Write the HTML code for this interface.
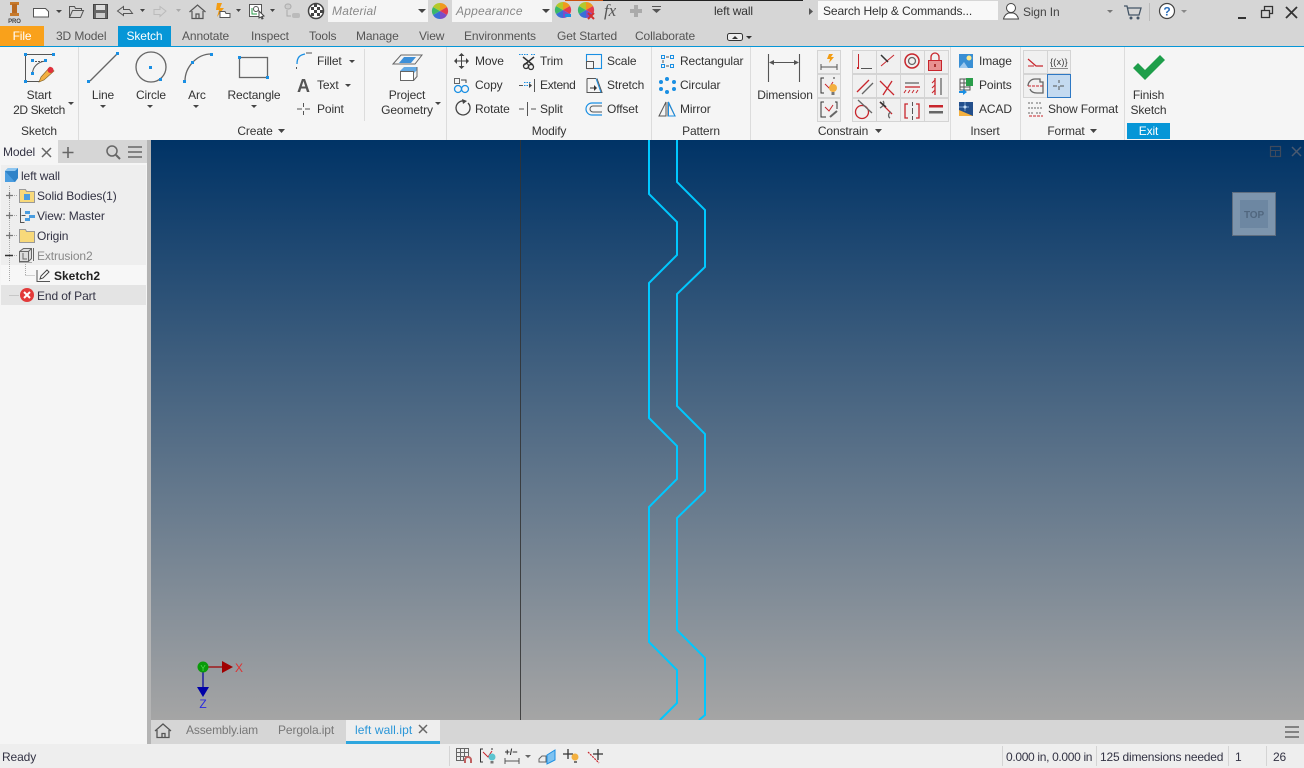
<!DOCTYPE html>
<html><head><meta charset="utf-8"><title>left wall</title>
<style>
html,body{margin:0;padding:0;background:#f5f5f5;width:1304px;height:768px;overflow:hidden}
svg{display:block;position:absolute;left:0;top:0}
text{font-family:"Liberation Sans",sans-serif;font-size:12px;fill:#333;letter-spacing:-.12px}
.m{text-anchor:middle}
.tab{fill:#555}
.ic{fill:none;stroke:#555;stroke-width:1}
.r{fill:none;stroke:#c8252c;stroke-width:1.3}
.g{fill:none;stroke:#666;stroke-width:1.3}
.b{fill:#1a8fe3}
.a{fill:#444}
</style></head><body>
<svg width="1304" height="768" viewBox="0 0 1304 768" xmlns="http://www.w3.org/2000/svg">
<defs>
<linearGradient id="vp" x1="0" y1="0" x2="0" y2="1"><stop offset="0" stop-color="#003366"/><stop offset="1" stop-color="#a5a5a5"/></linearGradient>
</defs>
<!-- bars -->
<rect x="0" y="0" width="1304" height="46" fill="#d6d6d6"/>
<rect x="0" y="46" width="1304" height="1" fill="#0696d7"/>
<rect x="0" y="47" width="1304" height="93" fill="#f5f5f5"/>
<!-- title bar -->
<rect x="10" y="2" width="9" height="3" fill="#c77a2c"/><rect x="12" y="4" width="5" height="10" fill="#b96a22"/><rect x="10" y="13" width="9" height="3" fill="#c77a2c"/>
<text x="14.5" y="23" class="m" style="font-size:6px;font-weight:bold;fill:#444">PRO</text>
<path d="M33.5 8.5h12l3 3v5.500h-15z" fill="#fff" stroke="#555"/>
<path class="a" d="M56 10h6l-3 3z"/>
<path d="M69.500 17.500v-11h5l1 2h6v2M69.500 17.500l3-7h11l-3 7z" fill="none" stroke="#555"/>
<rect x="93.500" y="4.500" width="14" height="14" fill="#666" stroke="#444"/><rect x="96" y="5" width="9" height="5" fill="#ddd"/><rect x="96" y="13" width="9" height="5" fill="#ccc"/>
<path d="M117.500 11l6-4.500v3h6l3 4h-9v2z" fill="none" stroke="#555"/>
<path class="a" d="M140 9h5l-2.500 3z"/>
<path d="M166 11l-6-4.500v3h-6v5h6v2z" fill="none" stroke="#bbb"/>
<path fill="#aaa" d="M176 9h5l-2.500 3z"/>
<path d="M189.500 12l8-7 8 7M192 11v7.500h11V11M196 18v-4h3v4" fill="none" stroke="#555" stroke-width="1.200"/>
<path fill="#f39c12" d="M217 3h5l-2 5h4l-7 9 2-7h-3z"/>
<path d="M220 17.500v-6h5l1 2h4v4z" fill="#fff" stroke="#555"/>
<path class="a" d="M236 9h5l-2.500 3z"/>
<rect x="249.500" y="4.500" width="12" height="12" fill="#fff" stroke="#555"/><path d="M252 8v6h5" fill="none" stroke="#2a9d4a"/><circle cx="256" cy="9" r="2.500" fill="none" stroke="#555"/><path fill="#fff" stroke="#444" d="M259 11l5 5-2 .5 1 2-1 .5-1-2-2 1z"/>
<path class="a" d="M270 9h5l-2.500 3z"/>
<rect x="285" y="4" width="6" height="5" rx="2.500" fill="#ccc" stroke="#aaa"/><rect x="292" y="13" width="8" height="5" rx="2" fill="#bbb"/><path d="M287 10v6h4" fill="none" stroke="#aaa"/>
<circle cx="316" cy="11" r="7.500" fill="#fff" stroke="#444" stroke-width="1.500"/>
<g fill="#444"><rect x="311" y="7" width="3" height="3"/><rect x="317" y="7" width="3" height="3"/><rect x="314" y="10" width="3" height="3"/><rect x="320" y="10" width="3" height="3"/><rect x="311" y="13" width="3" height="3"/><rect x="317" y="13" width="3" height="3"/><rect x="314" y="4" width="3" height="3"/></g>
<rect x="328" y="0" width="100" height="22" fill="#f5f5f5"/>
<text x="332" y="15" style="font-style:italic;fill:#888;letter-spacing:.2px">Material</text>
<path class="a" d="M418 9h8l-4 4z"/>
<g id="wheel"><path d="M440 11V3a8 8 0 0 1 7 4z" fill="#ef9a1d"/><path d="M440 11l7-4a8 8 0 0 1 0 8z" fill="#e23a4f"/><path d="M440 11l7 4a8 8 0 0 1-7 4z" fill="#7b4dc8"/><path d="M440 11v8a8 8 0 0 1-7-4z" fill="#3a6fd8"/><path d="M440 11l-7 4a8 8 0 0 1 0-8z" fill="#39b86a"/><path d="M440 11l-7-4a8 8 0 0 1 7-4z" fill="#b5c82a"/></g>
<rect x="452" y="0" width="100" height="22" fill="#f5f5f5"/>
<text x="456" y="15" style="font-style:italic;fill:#888;letter-spacing:.2px">Appearance</text>
<path class="a" d="M542 9h8l-4 4z"/>
<use href="#wheel" x="123" y="-1"/><rect x="565" y="14" width="6" height="3" fill="#1a8fe3"/>
<use href="#wheel" x="146" y="-1"/><path d="M588 13l6 6m0-6l-6 6" stroke="#d32f2f" stroke-width="2"/>
<text x="604" y="16" style="font-family:'Liberation Serif',serif;font-style:italic;font-size:17px;fill:#555">fx</text>
<path d="M634 5h4v4h4v4h-4v4h-4v-4h-4V9h4z" fill="#aaa"/>
<path d="M652 6h9v1h-9zM652 9h9l-4.500 4z" fill="#555"/>
<rect x="565" y="0" width="38" height="1" fill="#c8500f"/><rect x="603" y="0" width="200" height="1" fill="#222"/>
<text x="714" y="15">left wall</text>
<path fill="#555" d="M809 8l4 3.500-4 3.500z"/>
<rect x="818" y="1" width="180" height="19" fill="#f8f8f8"/>
<text x="823" y="15">Search Help &amp; Commands...</text>
<circle cx="1011" cy="8" r="4.500" fill="#fff" stroke="#444"/><path d="M1003.500 19c1-4 3-5 5-6h5c2 1 4 2 5 6z" fill="#fff" stroke="#444"/>
<text x="1023" y="16" style="fill:#444">Sign In</text>
<path fill="#777" d="M1107 10h6l-3 3z"/>
<path d="M1124 6h3l2 9h10l2-7h-13" fill="none" stroke="#456" stroke-width="1.300"/><circle cx="1131" cy="18" r="1.500" fill="#456"/><circle cx="1138" cy="18" r="1.500" fill="#456"/>
<rect x="1149" y="3" width="1" height="18" fill="#bbb"/>
<circle cx="1167" cy="11" r="7.500" fill="#fff" stroke="#444" stroke-width="1.200"/>
<text x="1167" y="15.500" class="m" style="font-weight:bold;fill:#2a6ebb;font-size:12px">?</text>
<path fill="#888" d="M1181 10h6l-3 3z"/>
<rect x="1238" y="17" width="8" height="2" fill="#333"/>
<path d="M1261.500 10.500h8v7h-8zM1264.500 10V6.500h8v7H1270" fill="none" stroke="#333" stroke-width="1.300"/>
<path d="M1286 7l11 11m0-11l-11 11" stroke="#333" stroke-width="1.800"/>
<!-- tabs -->
<rect x="0" y="26" width="44" height="20" fill="#f9a11b"/>
<text x="22" y="40" class="m" style="fill:#fff">File</text>
<rect x="118" y="26" width="53" height="20" fill="#0696d7"/>
<text x="144.500" y="40" class="m" style="fill:#fff">Sketch</text>
<text x="56" y="40" class="tab">3D Model</text>
<text x="182" y="40" class="tab">Annotate</text>
<text x="251" y="40" class="tab">Inspect</text>
<text x="309" y="40" class="tab">Tools</text>
<text x="356" y="40" class="tab">Manage</text>
<text x="419" y="40" class="tab">View</text>
<text x="464" y="40" class="tab">Environments</text>
<text x="557" y="40" class="tab">Get Started</text>
<text x="635" y="40" class="tab">Collaborate</text>
<rect x="727.500" y="33.500" width="15" height="7" rx="2" fill="#eee" stroke="#333"/><path fill="#333" d="M732 39l3-3 3 3z"/><path fill="#333" d="M746 36h6l-3 3z"/>
<!-- ribbon separators -->
<g fill="#dcdcdc"><rect x="78" y="47" width="1" height="93"/><rect x="446" y="47" width="1" height="93"/><rect x="651" y="47" width="1" height="93"/><rect x="750" y="47" width="1" height="93"/><rect x="950" y="47" width="1" height="93"/><rect x="1020" y="47" width="1" height="93"/><rect x="1124" y="47" width="1" height="93"/><rect x="364" y="49" width="1" height="72"/></g>
<!-- panel labels -->
<text x="39" y="135" class="m">Sketch</text>
<text x="255" y="135" class="m">Create</text><path class="a" d="M278 129h7l-3.500 4z"/>
<text x="549" y="135" class="m">Modify</text>
<text x="701" y="135" class="m">Pattern</text>
<text x="843" y="135" class="m">Constrain</text><path class="a" d="M875 129h7l-3.500 4z"/>
<text x="985" y="135" class="m">Insert</text>
<text x="1066" y="135" class="m">Format</text><path class="a" d="M1090 129h7l-3.500 4z"/>
<rect x="1127" y="123" width="43" height="16" fill="#0696d7"/>
<text x="1148.500" y="135" class="m" style="fill:#fff">Exit</text>
<!-- Start 2D Sketch -->
<path d="M25.500 54.500h28M25.500 54.500v27h14M32.500 74c0-7 5-12 13-13" fill="none" stroke="#555"/>
<path d="M32 61.500h13" fill="none" stroke="#555" stroke-dasharray="2 1"/>
<g class="b"><rect x="24" y="53" width="3" height="3"/><rect x="52" y="53" width="3" height="3"/><rect x="24" y="80" width="3" height="3"/><rect x="31" y="59" width="3" height="3"/><rect x="44" y="59" width="3" height="3"/><rect x="31" y="72" width="3" height="3"/></g>
<path d="M39 82l2-5 9-10 4 4-10 9z" fill="#f3b040" stroke="#8a6a30" stroke-width=".7"/><circle cx="50.500" cy="70" r="3" fill="#e0303c"/>
<text x="39" y="99" class="m">Start</text><text x="39" y="114" class="m" style="letter-spacing:-.4px">2D Sketch</text><path class="a" d="M68 102h6l-3 3z"/>
<!-- Line -->
<path d="M90 81l27-27" class="g"/><rect x="87" y="80" width="3" height="3" class="b"/><rect x="116" y="52" width="3" height="3" class="b"/>
<text x="103" y="99" class="m">Line</text><path class="a" d="M100 105h6l-3 3z"/>
<!-- Circle -->
<circle cx="151" cy="67" r="15" class="g"/><rect x="149" y="66" width="3" height="3" class="b"/><rect x="159" y="78" width="3" height="3" class="b"/>
<text x="151" y="99" class="m">Circle</text><path class="a" d="M147 105h6l-3 3z"/>
<!-- Arc -->
<path d="M185 81c0-14 12-27 26-27" class="g"/><rect x="183" y="80" width="3" height="3" class="b"/><rect x="191" y="61" width="3" height="3" class="b"/><rect x="210" y="53" width="3" height="3" class="b"/>
<text x="197" y="99" class="m">Arc</text><path class="a" d="M193 105h6l-3 3z"/>
<!-- Rectangle -->
<rect x="239.500" y="57.500" width="28" height="20" class="g"/><rect x="238" y="56" width="3" height="3" class="b"/><rect x="266" y="76" width="3" height="3" class="b"/>
<text x="254" y="99" class="m">Rectangle</text><path class="a" d="M251 105h6l-3 3z"/>
<!-- Fillet / Text / Point -->
<path d="M296.500 69v-2" stroke="#555" fill="none"/><path d="M297 64c0-7 3-9 8-10" stroke="#1a8fe3" fill="none" stroke-width="1.300"/><path d="M306 53h6" stroke="#555"/>
<text x="317" y="65">Fillet</text><path class="a" d="M349 60h6l-3 3z"/>
<text x="297" y="92" style="font-size:18px;font-weight:bold;fill:#555">A</text>
<text x="317" y="89">Text</text><path class="a" d="M345 84h6l-3 3z"/>
<path d="M297 109h5m3 0h5M303.500 103v4m0 4v4" stroke="#555" fill="none"/>
<text x="317" y="113">Point</text>
<!-- Project Geometry -->
<path d="M393 64l8-9h21l-7 9z" fill="none" stroke="#666"/><path d="M399 63l5-6h12l-5 6z" fill="#3d8fd8"/>
<path d="M400 71l4-4h13v3l-4 4h-13z" fill="#62a9e4"/><rect x="400.500" y="71.500" width="13" height="9" fill="#fff" stroke="#666"/><path d="M413.500 80.500l3.500-4V67" fill="none" stroke="#666"/>
<text x="407" y="99" class="m">Project</text><text x="407" y="114" class="m">Geometry</text><path class="a" d="M435 102h6l-3 3z"/>
<!-- Modify col 1 -->
<path d="M461.500 54v14M454.500 61h14" stroke="#444" fill="none"/><path fill="#444" d="M461.500 53l3 3h-6zM461.500 69l3-3h-6zM454 61l3-3v6zM469 61l-3-3v6z"/>
<text x="475" y="65">Move</text>
<rect x="454.500" y="78.500" width="5" height="5" fill="none" stroke="#666"/><path d="M461 80h5v3" fill="none" stroke="#444"/><circle cx="458" cy="89" r="3.500" fill="none" stroke="#1a8fe3" stroke-width="1.300"/><circle cx="465" cy="89" r="3.500" fill="none" stroke="#1a8fe3" stroke-width="1.300"/>
<text x="475" y="89">Copy</text>
<path d="M468 103a7 7 0 1 1-4-2" fill="none" stroke="#444" stroke-width="1.300"/><path fill="#444" d="M462 99l5 2-4 3z"/>
<text x="475" y="113">Rotate</text>
<!-- col 2 -->
<path d="M519 54.500h9m3 0h4" stroke="#1a8fe3" stroke-dasharray="1.500 1" fill="none"/>
<path d="M523 57l10 8M534 57l-10 8" stroke="#333" stroke-width="1.500" fill="none"/><circle cx="526" cy="66" r="2.500" fill="none" stroke="#333" stroke-width="1.300"/><circle cx="531" cy="67" r="2.500" fill="none" stroke="#333" stroke-width="1.300"/>
<text x="540" y="65">Trim</text>
<path d="M519 85.500h4" stroke="#555"/><path d="M524 85.500h7M524 82.500h7" stroke="#1a8fe3" stroke-dasharray="1.500 1"/><path fill="#444" d="M529 83l3 2.500-3 2.500z"/><path d="M534.500 79v13" stroke="#555"/>
<text x="540" y="89" style="letter-spacing:-.3px">Extend</text>
<path d="M519 109h5M531 109h5M527.500 102v14" stroke="#555" fill="none"/>
<text x="540" y="113">Split</text>
<!-- col 3 -->
<rect x="586.500" y="54.500" width="15" height="14" fill="none" stroke="#1a8fe3" stroke-width="1.100"/><rect x="586.500" y="61.500" width="7" height="7" fill="#f5f5f5" stroke="#555"/>
<text x="607" y="65">Scale</text>
<path d="M587 78.500h9M587 78.500v14h15l-5-14" fill="none" stroke="#555"/><path d="M596 78.500l5 14" stroke="#1a8fe3"/><path d="M590 88h5" stroke="#333"/><path fill="#333" d="M594 85l3 3-3 3z"/>
<text x="607" y="89">Stretch</text>
<path d="M602 103h-10a6 6 0 0 0 0 12h10" fill="none" stroke="#1a8fe3" stroke-width="1.200"/><path d="M602 106h-9a3 3 0 0 0 0 6h9" fill="none" stroke="#555"/>
<text x="607" y="113">Offset</text>
<!-- Pattern -->
<g fill="none" stroke="#1a8fe3" stroke-width="1"><rect x="661.500" y="55.500" width="3" height="3"/><rect x="670.500" y="55.500" width="3" height="3" /><rect x="661.500" y="64.500" width="3" height="3"/><rect x="670.500" y="64.500" width="3" height="3"/></g>
<path d="M666 57h3M666 66h3M663 60v3" stroke="#555" fill="none"/>
<text x="680" y="65">Rectangular</text>
<g class="b"><circle cx="667" cy="79" r="2"/><circle cx="674" cy="82" r="2"/><circle cx="674" cy="89" r="2"/><circle cx="667" cy="92" r="2"/><circle cx="661" cy="89" r="2"/><circle cx="661" cy="82" r="2"/></g>
<text x="680" y="89">Circular</text>
<path d="M666 102v14h-7zM668 102v14h7z" fill="none" stroke="#555"/><path d="M668.500 102v14h6.500z" fill="none" stroke="#1a8fe3"/>
<text x="680" y="113">Mirror</text>
<!-- Dimension -->
<path d="M768.500 54v28M799.500 54v28M770 62.500h28" stroke="#555" fill="none" stroke-width="1.100"/><path fill="#555" d="M769 62.500l5-2.500v5zM799 62.500l-5-2.500v5z"/>
<text x="785" y="99" class="m">Dimension</text>
<!-- constraint small -->
<g fill="#f0f0f0" stroke="#d4d4d4"><rect x="817.500" y="50.500" width="23" height="23"/><rect x="817.500" y="74.500" width="23" height="23" /><rect x="817.500" y="98.500" width="23" height="23"/>
<rect x="852.500" y="50.500" width="96" height="23"/><rect x="852.500" y="74.500" width="96" height="23"/><rect x="852.500" y="98.500" width="96" height="23"/>
<path d="M876.500 50v72M900.500 50v72M924.500 50v72" fill="none"/></g>
<path d="M821 64v6M837 64v6M821 67h16" stroke="#555" fill="none"/><path fill="#f39c12" d="M829 54h4l-2 3h3l-5 6 1-4h-3z"/>
<path d="M824 78h-3v15h3M835 78h-2" stroke="#333" fill="none"/><path d="M825 84l4 4 4-6" stroke="#c8252c" fill="none"/><circle cx="833" cy="88" r="4" fill="#f3b040"/><rect x="831.500" y="92" width="3" height="3" fill="#777"/>
<path d="M824 102h-3v15h3M835 102h2v7M824 117h2" stroke="#333" fill="none"/><path d="M825 107l4 4 4-6" stroke="#c8252c" fill="none"/><path d="M830 117l7-6" stroke="#666" stroke-width="2" fill="none"/>
<path d="M858.500 54v14" stroke="#c8252c"/><rect x="857" y="67" width="2" height="2" fill="#c8252c"/><path d="M861 68.500h11" stroke="#555"/>
<path d="M881 66l13-11" stroke="#c8252c"/><path d="M881 55l7 7" stroke="#333" stroke-width="1.500"/>
<circle cx="912" cy="61" r="7" class="r" style="stroke-width:1.500"/><circle cx="912" cy="61" r="3.500" fill="none" stroke="#666" stroke-width="1.300"/>
<rect x="928.500" y="60.500" width="13" height="10" fill="#e89090" stroke="#c8252c"/><path d="M931 60v-3a4 4 0 0 1 8 0v3" class="r"/><rect x="934" y="64" width="2" height="3" fill="#a33"/>
<path d="M857 92l12-12" class="r"/><path d="M862 94l11-11" class="g"/>
<path d="M880 81l14 14" class="r"/><path d="M883 95l9-14" class="g" style="stroke:#c8252c"/>
<path d="M905 83h14" class="g"/><path d="M905 87h15" class="r"/><path d="M906 90l-2 3M910 90l-2 3M914 90l-2 3M918 90l-2 3" stroke="#c8252c" fill="none"/>
<path d="M935 78v17" class="r"/><path d="M941 78v17" class="g"/><path d="M935 80l-3 3M935 85l-3 3M935 90l-3 3" stroke="#c8252c" fill="none"/>
<circle cx="862" cy="112" r="6.500" class="r"/><path d="M858 100l14 13" class="g"/>
<path d="M880 102l12 12" class="r"/><path d="M880 108c5-3 4-6 3-7M891 112c-3 1-3 5-1 6" class="g"/><path d="M880 102l6 5" stroke="#333" stroke-width="1.500"/>
<path d="M908 104h-3v14h3M916 104h3v14h-3" class="r"/><path d="M912.500 102v4M912.500 108v6M912.500 116v4" stroke="#555" fill="none"/>
<rect x="929" y="105" width="14" height="2.500" fill="#c8252c"/><rect x="929" y="111" width="14" height="2.500" fill="#666"/>
<!-- Insert -->
<rect x="959" y="54" width="14" height="14" fill="#3a8fd4"/><circle cx="969" cy="58" r="2.500" fill="#ffe98a"/><path fill="#9ec9ee" d="M959 68l5-6 4 6z"/>
<text x="979" y="65">Image</text>
<rect x="960" y="79" width="10" height="11" fill="none" stroke="#555"/><path d="M960 83h10M960 87h10M964 79v11" stroke="#555"/><rect x="966" y="78" width="7" height="8" fill="#2a9d4a"/><path d="M959 92h6" stroke="#1a8fe3" stroke-width="2"/><path class="b" d="M963 89l4 3-4 3z"/>
<text x="979" y="89">Points</text>
<rect x="959" y="102" width="14" height="14" fill="#234f8c"/><path fill="#f3b040" d="M959 110l14 6h-14z"/><circle cx="965" cy="107" r="1.500" fill="#fff"/><path d="M965 102v9M959 107h10" stroke="#9cc3ea" stroke-width=".7"/>
<text x="979" y="113">ACAD</text>
<!-- Format -->
<g fill="#f0f0f0" stroke="#d4d4d4"><rect x="1023.500" y="50.500" width="47" height="23"/><path d="M1047.500 50v24" fill="none"/><rect x="1023.500" y="74.500" width="24" height="23"/></g>
<rect x="1047.500" y="74.500" width="23" height="23" fill="#c4daf0" stroke="#2d78c4"/>
<path d="M1028 59l8 7h7" fill="none" stroke="#c8252c" stroke-width="1.200"/><path d="M1028 66h6" stroke="#c8252c"/>
<text x="1059" y="65" class="m" style="font-size:9px;letter-spacing:.3px">{(x)}</text><path d="M1050 68.500h18" stroke="#888"/>
<path d="M1028 86a7 7 0 0 1 7-7h5v3h3v4" class="g"/><path d="M1028 86h15" stroke="#c8252c" stroke-dasharray="3 1" fill="none"/><path d="M1030 89c1 3 4 4 7 4h6v-7" class="g"/>
<path d="M1053 86h4m3 0h4M1059 80v3m0 3v4" stroke="#555" fill="none"/>
<path d="M1028 103h6m2 0h6M1028 108h14M1028 113h6m2 0h6" stroke="#666" stroke-dasharray="2 1"/><path d="M1029 116h14" stroke="#c8252c" stroke-dasharray="3 1"/>
<text x="1048" y="113">Show Format</text>
<!-- Finish -->
<path d="M1133 68l5-5 7 7 15-15 5 5-20 20z" fill="#1e9e4a"/>
<text x="1148.500" y="99" class="m">Finish</text><text x="1148.500" y="114" class="m">Sketch</text>
<!-- browser -->
<rect x="0" y="140" width="147" height="580" fill="#f5f5f5"/>
<rect x="58" y="140" width="89" height="23" fill="#d6d6d6"/>
<rect x="147" y="140" width="4" height="604" fill="#b4b4b4"/>
<text x="3" y="156" style="fill:#334">Model</text>
<path d="M42 148l9 9m0-9l-9 9" stroke="#666" stroke-width="1.500"/>
<path d="M68 147v11M62.500 152.500h11" stroke="#666" stroke-width="1.600"/>
<circle cx="112" cy="151" r="5" fill="none" stroke="#666" stroke-width="1.500"/><path d="M116 155l4 4" stroke="#666" stroke-width="2"/>
<path d="M128 147h14M128 152h14M128 157h14" stroke="#666" stroke-width="1.500"/>
<rect x="1" y="165" width="145" height="100" fill="#eeeeee"/>
<rect x="1" y="265" width="145" height="20" fill="#f7f7f7"/>
<rect x="1" y="285" width="145" height="20" fill="#e4e4e4"/>
<path d="M9.500 186v95M9.500 295.500h9M25.500 275.500h9" stroke="#aaa" stroke-dasharray="1 1" fill="none"/><path d="M25.500 262v13" stroke="#aaa" stroke-dasharray="1 1"/>
<path d="M14 195.500h4M14 215.500h4M14 235.500h4M14 255.500h4" stroke="#aaa" stroke-dasharray="1 1"/>
<path d="M6 195.500h7M9.500 192v7M6 215.500h7M9.500 212v7M6 235.500h7M9.500 232v7" stroke="#777" stroke-width="1.200"/>
<path d="M5 255.500h8" stroke="#333" stroke-width="1.500"/>
<!-- tree icons -->
<path d="M5 171l3-3h10v10l-3 4H5z" fill="#4a9de0"/><path d="M5 171h10l3-3v10l-3 4z" fill="#2f83c8"/><path d="M5 171l3-3h10l-3 3z" fill="#8ec6f0"/>
<text x="21" y="180" style="fill:#334">left wall</text>
<path d="M19.500 189.500h6l1 2h8v11h-15z" fill="#f8d97a" stroke="#999"/><rect x="24" y="194" width="6" height="6" fill="#4a9de0"/>
<text x="37" y="200" style="fill:#334">Solid Bodies(1)</text>
<path d="M21 208.500h-.5v14h4M21.500 215.500h4" fill="none" stroke="#555"/><rect x="25" y="211" width="5" height="3" fill="#4a9de0"/><rect x="25" y="218" width="5" height="3" fill="#4a9de0"/><rect x="29" y="215" width="6" height="3" fill="#4a9de0"/>
<text x="37" y="220" style="fill:#334">View: Master</text>
<path d="M19.500 229.500h6l1 2h8v11h-15z" fill="#f8d97a" stroke="#999"/>
<text x="37" y="240" style="fill:#334">Origin</text>
<path d="M19.500 251.500l4-3h8v10l-3 3h-9z" fill="#ddd" stroke="#666"/><path d="M19.500 251.500h9v10M28.500 251.500l3-3" fill="none" stroke="#666"/><path d="M23 253v6h4" stroke="#666" fill="none"/><path d="M33.500 248v13" stroke="#666"/><path d="M19 262h13v1H19z" fill="#aaa"/>
<text x="37" y="260" style="fill:#888">Extrusion2</text>
<path d="M37 270v11.500h13" stroke="#555" fill="none"/><path d="M40 279l1-3 6-6 2 2-6 6z" fill="#fff" stroke="#444"/>
<text x="54" y="280" style="font-weight:bold;fill:#222;letter-spacing:0">Sketch2</text>
<circle cx="27" cy="295" r="7" fill="#e23a3a"/><path d="M24 292l6 6m0-6l-6 6" stroke="#fff" stroke-width="2"/>
<text x="37" y="300" style="fill:#334">End of Part</text>
<!-- viewport -->
<rect x="151" y="140" width="1153" height="580" fill="url(#vp)"/>
<path d="M520.500 140v580" stroke="#333" stroke-width="1" opacity=".85"/>
<g fill="none" stroke="#00c8ff" stroke-width="2">
<path d="M649 140V194L677 222V255L649 283V418L677 446V479L649 507V642L677 670V703L660 720"/>
<path d="M677 140V182L705 210V267L677 294V406L705 434V491L677 518V630L705 658V715L699 720"/>
</g>
<!-- view controls -->
<rect x="1270.500" y="146.500" width="10" height="10" fill="none" stroke="#3f4a5c" stroke-width="1.200"/><path d="M1270 150.500h11M1275.500 150v7" stroke="#3f4a5c"/>
<path d="M1292 147l9 9m0-9l-9 9" stroke="#4a5a70" stroke-width="1.500"/>
<rect x="1232.500" y="192.500" width="43" height="43" fill="#7d95ad" stroke="#5f6e80"/>
<rect x="1240" y="200" width="28" height="28" fill="#6d87a2"/>
<text x="1254" y="218" class="m" style="font-size:10px;font-weight:bold;fill:#51677f">TOP</text>
<!-- triad -->
<path d="M203 667h21" stroke="#a00000" stroke-width="1.200"/><path fill="#a00000" d="M222 661l11 6-11 6z"/>
<text x="235" y="672" style="fill:#e03030;font-size:12px">X</text>
<path d="M203 667v20" stroke="#0000a0" stroke-width="1.200"/><path fill="#0000a8" d="M197 687h12l-6 10z"/>
<text x="203" y="708" class="m" style="fill:#2a2ae0;font-size:12px">Z</text>
<circle cx="203" cy="667" r="5.500" fill="#0a9a0a"/><text x="203" y="671" class="m" style="font-size:8px;fill:#4fdc4f">Y</text>
<!-- doc tabs -->
<rect x="151" y="720" width="1153" height="24" fill="#d6d6d6"/>
<path d="M155 731l8-7 8 7M157 730v7.500h12V730M162 737.500v-4h3v4" fill="none" stroke="#555" stroke-width="1.300"/>
<text x="186" y="734" style="fill:#777;letter-spacing:-.15px">Assembly.iam</text>
<text x="278" y="734" style="fill:#777">Pergola.ipt</text>
<rect x="346" y="720" width="94" height="24" fill="#eeeeee"/><rect x="346" y="741" width="94" height="3" fill="#2ea6de"/>
<text x="355" y="734" style="fill:#2a96d8;letter-spacing:.1px">left wall.ipt</text>
<path d="M419 725l8 8m0-8l-8 8" stroke="#666" stroke-width="1.500"/>
<path d="M1285 727h14M1285 732h14M1285 737h14" stroke="#666" stroke-width="1.600"/>
<!-- status -->
<rect x="0" y="744" width="1304" height="24" fill="#eeeeee"/>
<rect x="147" y="720" width="4" height="24" fill="#b4b4b4"/>
<text x="2" y="761" style="fill:#334">Ready</text>
<rect x="449" y="746" width="1" height="20" fill="#d4d4d4"/>
<path d="M456.500 748.500h12v8h-5v4h-7zM456.500 752.500h12M456.500 756.500h7M460.500 748.500v12M464.500 748.500v8" fill="none" stroke="#666"/><path d="M465 763v-3a3 3 0 0 1 6 0v3" stroke="#c06060" fill="none" stroke-width="2"/>
<path d="M483 749h-2.500v13h2.500M491 749h2" stroke="#333" fill="none"/><path d="M483 752l5 5 4-6" stroke="#c8252c" fill="none"/><circle cx="492" cy="757" r="3.500" fill="#5cc4d0"/><rect x="490.500" y="761" width="3" height="2.500" fill="#777"/>
<text x="511" y="755" class="m" style="font-size:9px;font-weight:bold">+/−</text><path d="M505 758v6M519 758v6M505 761h14" stroke="#555" fill="none"/>
<path fill="#666" d="M525 755h6l-3 3z"/>
<path d="M539 762v-3l3-3h4v6z" fill="none" stroke="#666"/><path d="M547 755l8-5v10l-8 4z" fill="#7ec2f0" stroke="#1a8fe3"/>
<path d="M568 749v10M563 754h10" stroke="#333" stroke-width="1.300"/><circle cx="575" cy="757" r="3.500" fill="#f3b040"/><rect x="574" y="761" width="3" height="2" fill="#777"/>
<path d="M588 752l11 11" stroke="#c8252c" stroke-dasharray="2 1" stroke-width="1.200"/><path d="M598 749v11M593 754h10" stroke="#333" stroke-width="1.300"/>
<g fill="#d4d4d4"><rect x="1002" y="746" width="1" height="20"/><rect x="1096" y="746" width="1" height="20"/><rect x="1228" y="746" width="1" height="20"/><rect x="1266" y="746" width="1" height="20"/></g>
<text x="1006" y="761" style="fill:#334;letter-spacing:-.33px">0.000 in, 0.000 in</text>
<text x="1100" y="761" style="fill:#334;letter-spacing:-.2px">125 dimensions needed</text>
<text x="1235" y="761" style="fill:#334">1</text>
<text x="1273" y="761" style="fill:#334">26</text>
</svg>
</body></html>
